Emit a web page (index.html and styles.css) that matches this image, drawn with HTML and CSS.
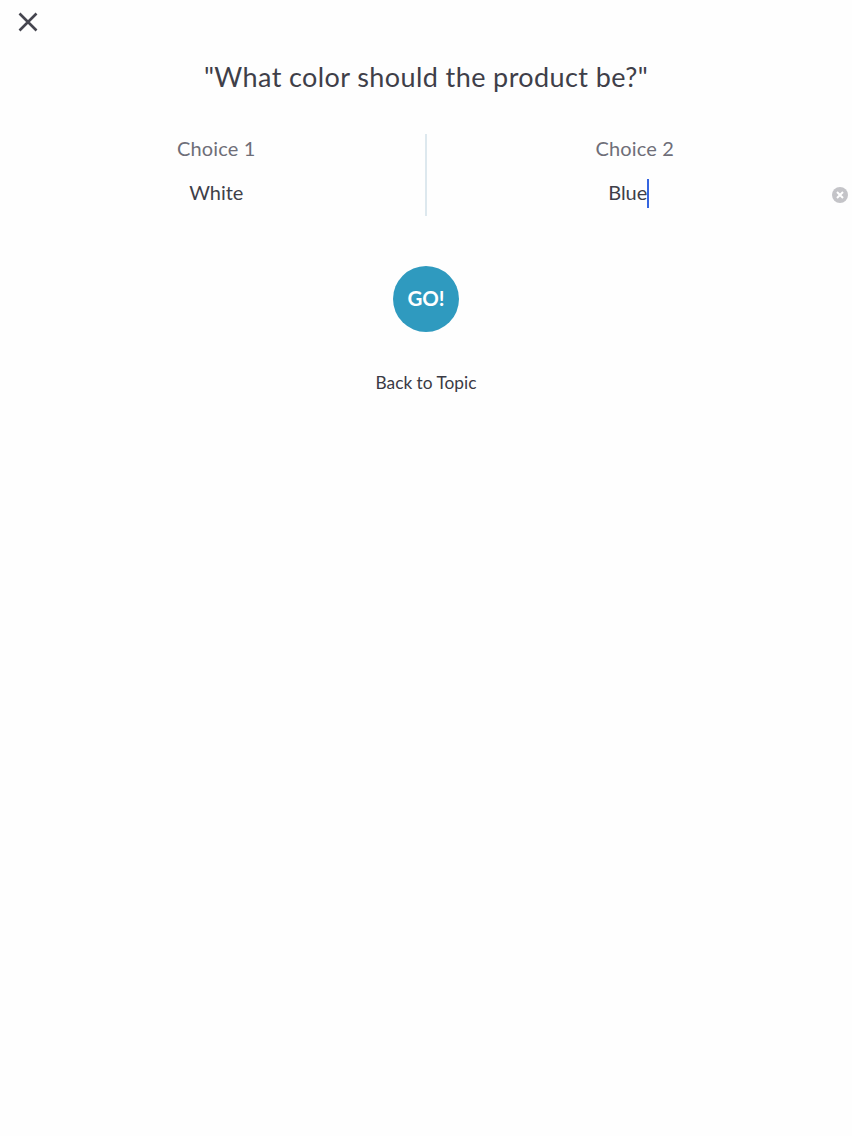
FILE: index.html
```html
<!doctype html>
<html lang="en">
  <head>
    <meta charset="UTF-8" />
    <meta name="viewport" content="width=device-width, initial-scale=1.0" />
    <title>Choices</title>
    <link rel="stylesheet" href="styles.css">
  </head>
  <body>
    <div class="top-bar">
      <button class="close-button" aria-label="Close">
        <svg width="22" height="22" viewBox="0 0 22 22">
          <path d="M2.5 2.5 L19.5 19.5 M19.5 2.5 L2.5 19.5" stroke="#45454f" stroke-width="2.6" fill="none" />
        </svg>
      </button>
    </div>

    <h1 class="question">"What color should the product be?"</h1>

    <div class="choices">
      <div class="choice choice-left">
        <div class="choice-label">Choice 1</div>
        <div class="choice-value">White</div>
      </div>
      <div class="choice choice-right">
        <div class="choice-label">Choice 2</div>
        <div class="choice-value choice-editing">
          <span class="typed">Blue</span>
          <span class="clear-icon">
            <svg width="16" height="16" viewBox="0 0 16 16">
              <circle cx="8" cy="8" r="8" fill="#c4c4c8" />
              <path d="M5 5 L11 11 M11 5 L5 11" stroke="#fff" stroke-width="2" fill="none" />
            </svg>
          </span>
        </div>
      </div>
    </div>

    <div class="actions">
      <button class="go-button">GO!</button>
      <a class="back-link" href="#">Back to Topic</a>
    </div>
  </body>
</html>
```

FILE: styles.css
```css
body {
  font-family: Lato, "Open Sans", sans-serif;
  margin: 0;
  background-color: #fefefe;
  color: #3f3f49;
}
.top-bar {
  height: 44px;
  padding: 11px 0 0 17px;
  box-sizing: border-box;
}
.close-button {
  display: block;
  padding: 0;
  width: 22px;
  height: 22px;
  background: none;
  border: none;
  cursor: pointer;
}
.question {
  margin: 14px 0 0;
  font-size: 27px;
  line-height: 38px;
  font-weight: 400;
  letter-spacing: 0.4px;
  text-align: center;
}
.choices {
  display: flex;
  margin-top: 38px;
  height: 82px;
}
.choice {
  flex: 1;
  text-align: center;
}
.choice-left {
  padding-left: 8px;
  border-right: 2px solid #dde8ee;
}
.choice-right {
  padding-right: 9px;
}
.choice-label {
  margin-top: 1px;
  font-size: 20px;
  line-height: 26px;
  letter-spacing: 0.15px;
  color: #6e6e78;
}
.choice-value {
  margin-top: 18px;
  font-size: 20px;
  line-height: 26px;
}
.choice-editing {
  position: relative;
  padding-right: 12px;
}
.typed {
  display: inline-block;
  border-right: 2px solid #3565e0;
  height: 29px;
}
.clear-icon {
  position: absolute;
  right: -5px;
  top: 8px;
  line-height: 0;
}
.actions {
  display: flex;
  flex-direction: column;
  align-items: center;
  margin-top: 50px;
}
.go-button {
  width: 66px;
  height: 66px;
  padding: 0 0 2px;
  border: none;
  border-radius: 50%;
  background-color: #2f9abf;
  color: white;
  font-family: inherit;
  font-size: 20.5px;
  font-weight: 700;
  cursor: pointer;
}
.back-link {
  margin-top: 40px;
  font-size: 17.3px;
  line-height: 22px;
  color: #3a3a44;
  text-decoration: none;
}
```
